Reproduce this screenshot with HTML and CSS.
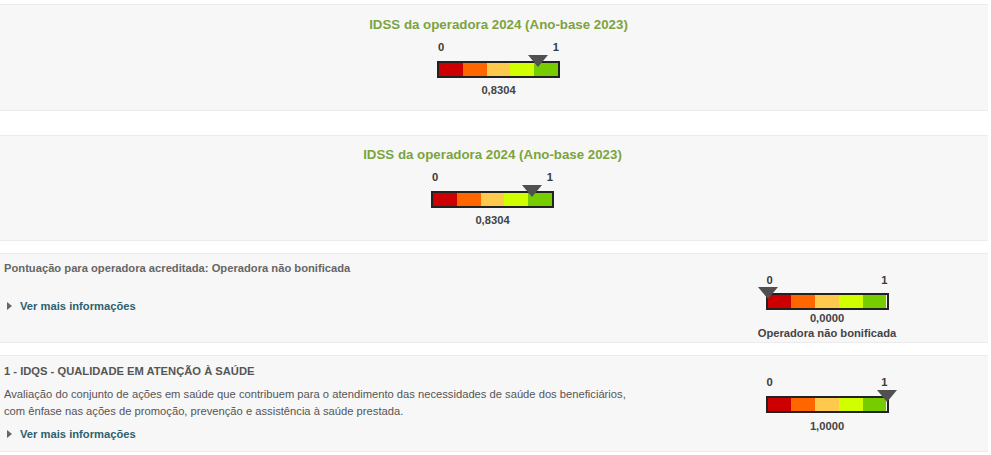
FILE: index.html
```html
<!DOCTYPE html>
<html lang="pt-BR">
<head>
<meta charset="utf-8">
<title>IDSS da operadora</title>
<link rel="stylesheet" href="styles.css">
</head>
<body>
<div class="page">
  <section class="panel panel-summary panel-a">
    <h2 class="summary-title">IDSS da operadora 2024 (Ano-base 2023)</h2>
    <div class="gauge">
      <div class="gauge-labels"><span>0</span><span>1</span></div>
      <div class="gauge-bar">
        <span class="seg s1"></span><span class="seg s2"></span><span class="seg s3"></span><span class="seg s4"></span><span class="seg s5"></span>
        <span class="marker" style="left: 83.04%"></span>
      </div>
      <div class="gauge-value">0,8304</div>
    </div>
  </section>

  <section class="panel panel-summary panel-b">
    <h2 class="summary-title">IDSS da operadora 2024 (Ano-base 2023)</h2>
    <div class="gauge">
      <div class="gauge-labels"><span>0</span><span>1</span></div>
      <div class="gauge-bar">
        <span class="seg s1"></span><span class="seg s2"></span><span class="seg s3"></span><span class="seg s4"></span><span class="seg s5"></span>
        <span class="marker" style="left: 83.04%"></span>
      </div>
      <div class="gauge-value">0,8304</div>
    </div>
  </section>

  <section class="panel panel-row panel-c">
    <div class="row-text">
      <h3 class="row-title">Pontuação para operadora acreditada: Operadora não bonificada</h3>
      <a class="more more-c" href="#"><span class="caret"></span>Ver mais informações</a>
    </div>
    <div class="row-gauge">
      <div class="gauge gauge-c">
        <div class="gauge-labels"><span>0</span><span>1</span></div>
        <div class="gauge-bar">
          <span class="seg s1"></span><span class="seg s2"></span><span class="seg s3"></span><span class="seg s4"></span><span class="seg s5"></span>
          <span class="marker" style="left: 0%"></span>
        </div>
        <div class="gauge-value tight">0,0000</div>
        <div class="gauge-caption">Operadora não bonificada</div>
      </div>
    </div>
  </section>

  <section class="panel panel-row panel-d">
    <div class="row-text">
      <h3 class="row-title caps">1 - IDQS - QUALIDADE EM ATENÇÃO À SAÚDE</h3>
      <p class="row-desc">Avaliação do conjunto de ações em saúde que contribuem para o atendimento das necessidades de saúde dos beneficiários, com ênfase nas ações de promoção, prevenção e assistência à saúde prestada.</p>
      <a class="more" href="#"><span class="caret"></span>Ver mais informações</a>
    </div>
    <div class="row-gauge">
      <div class="gauge gauge-d">
        <div class="gauge-labels"><span>0</span><span>1</span></div>
        <div class="gauge-bar">
          <span class="seg s1"></span><span class="seg s2"></span><span class="seg s3"></span><span class="seg s4"></span><span class="seg s5"></span>
          <span class="marker" style="left: 100%"></span>
        </div>
        <div class="gauge-value">1,0000</div>
      </div>
    </div>
  </section>
</div>
</body>
</html>
```

FILE: styles.css
```css
* { box-sizing: border-box; }

html, body {
  margin: 0;
  padding: 0;
  background: #ffffff;
}

body {
  font-family: "Liberation Sans", Arial, Helvetica, sans-serif;
  font-size: 11.2px;
  color: #555555;
}

.page {
  width: 988px;
  padding-top: 4px;
  display: flex;
  flex-direction: column;
}

.panel {
  background: #f7f7f7;
  border-top: 1px solid #ebebeb;
  border-bottom: 1px solid #ebebeb;
}

/* summary panels */
.panel-summary {
  display: flex;
  flex-direction: column;
  align-items: center;
  height: 107px;
}

.panel-a {
  padding: 12px 0 0 9px;
}

.panel-b {
  margin-top: 24px;
  height: 106px;
  padding: 11px 3px 0 0;
}

.summary-title {
  margin: 0;
  font-size: 13.3px;
  line-height: 16px;
  font-weight: bold;
  color: #7ba43e;
}

/* gauge */
.gauge {
  width: 123px;
  display: flex;
  flex-direction: column;
  align-items: stretch;
}

.panel-summary .gauge {
  margin-top: 8px;
}

.gauge-labels {
  display: flex;
  justify-content: space-between;
  font-weight: bold;
  font-size: 11.2px;
  line-height: 13px;
  color: #3a3a3a;
  padding: 0 1px 0 1px;
}

.gauge-bar {
  position: relative;
  margin-top: 7px;
  height: 17px;
  border: 2px solid #222222;
  display: flex;
}

.seg { flex: 1; height: 100%; }
.s1 { background: #cc0000; }
.s2 { background: #ff6600; }
.s3 { background: #ffc94d; }
.s4 { background: #d2ff00; }
.s5 { background: #77cc00; }

.marker {
  position: absolute;
  top: -8px;
  width: 0;
  height: 0;
  margin-left: -10px;
  border-left: 10px solid transparent;
  border-right: 10px solid transparent;
  border-top: 12px solid #505050;
}

.gauge-value {
  margin-top: 6px;
  text-align: center;
  font-weight: bold;
  font-size: 11.2px;
  line-height: 13px;
  color: #444444;
}

.gauge-value.tight {
  margin-top: 2px;
}

.gauge-caption {
  align-self: center;
  margin-top: 2px;
  text-align: center;
  font-weight: bold;
  font-size: 11.2px;
  line-height: 13px;
  color: #444444;
  white-space: nowrap;
}

/* row panels */
.panel-row {
  display: flex;
  justify-content: space-between;
}

.panel-c {
  margin-top: 12px;
  height: 90px;
  padding: 7px 0 0 4px;
}

.panel-d {
  margin-top: 12px;
  height: 97px;
  padding: 8px 0 0 4px;
}

.row-text {
  width: 632px;
  display: flex;
  flex-direction: column;
  align-items: flex-start;
}

.row-title {
  margin: 0;
  font-size: 11.2px;
  line-height: 14px;
  font-weight: bold;
  color: #666666;
}

.row-title.caps {
  color: #555555;
}

.row-desc {
  margin: 8px 0 0 0;
  font-size: 11.2px;
  line-height: 17px;
  color: #555555;
}

.more {
  display: flex;
  align-items: center;
  gap: 8px;
  margin-top: 7px;
  padding-left: 3px;
  font-weight: bold;
  font-size: 11.2px;
  line-height: 14px;
  color: #2e5f6e;
  text-decoration: none;
}

.more-c {
  margin-top: 24px;
}

.caret {
  width: 0;
  height: 0;
  border-top: 4px solid transparent;
  border-bottom: 4px solid transparent;
  border-left: 5px solid #666666;
}

.row-gauge {
  width: 300px;
  padding-right: 22px;
  display: flex;
  justify-content: center;
}

.gauge-c { margin-top: 13px; }
.gauge-d { margin-top: 12px; }

.gauge-d .gauge-value { margin-top: 7px; }
.gauge-c .gauge-bar { margin-top: 6px; }
```
